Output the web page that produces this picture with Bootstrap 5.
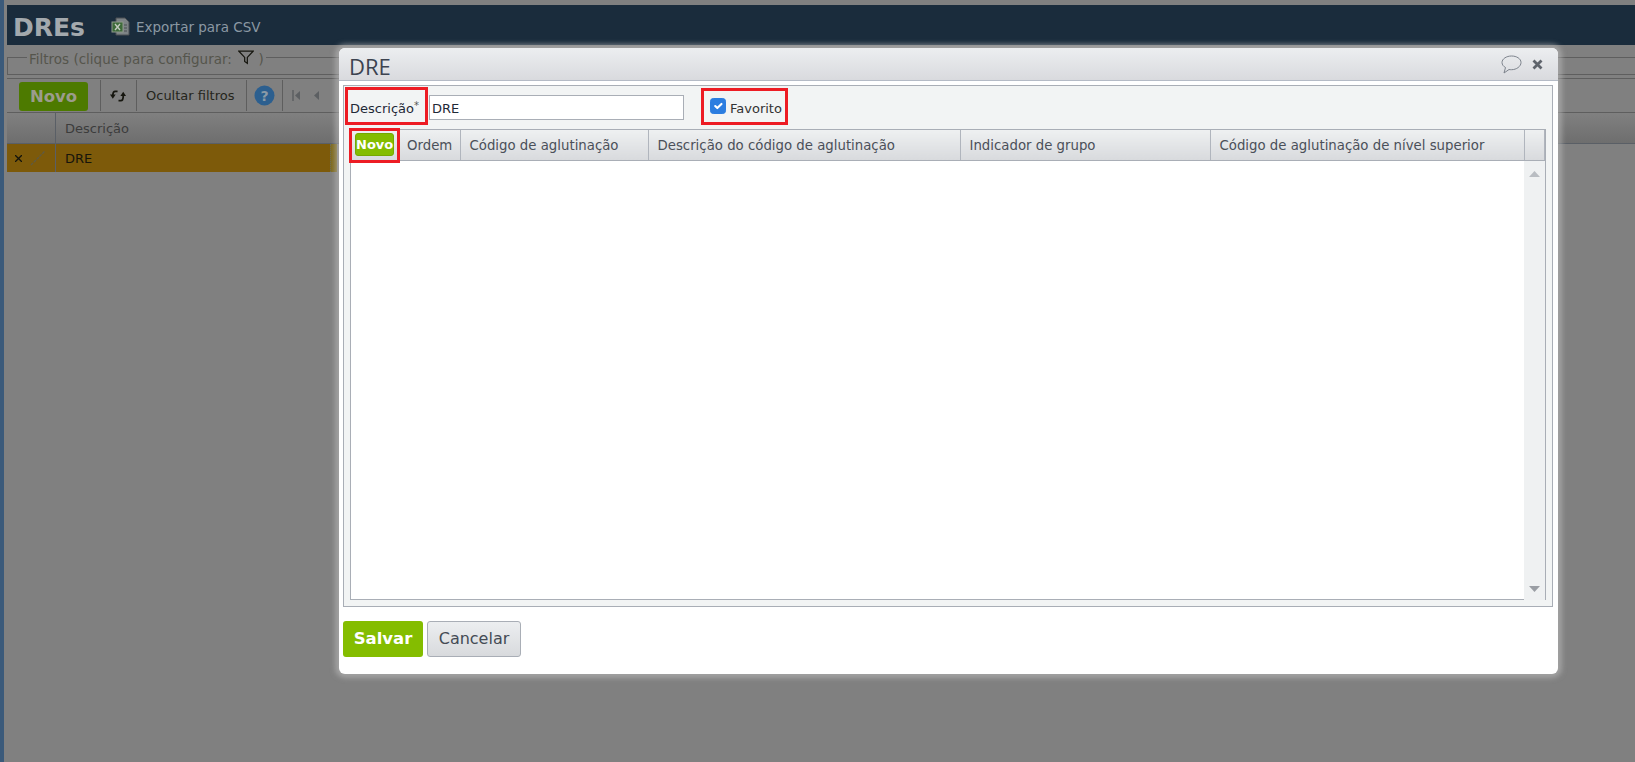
<!DOCTYPE html>
<html lang="pt-BR">
<head>
    <meta charset="UTF-8">
    <title>DREs</title>
    <link href="https://cdn.jsdelivr.net/npm/bootstrap@5.3.0/dist/css/bootstrap.min.css" rel="stylesheet">
    <style>
        html, body { height: 100%; overflow: hidden; }
        body { background: #808080; font-family: "DejaVu Sans", Verdana, sans-serif; font-size: 13px; color: #222; }

        /* pagina de fundo (escurecida) */
        .page-back { height: 762px; padding: 5px 0 0 3px; border-left: 4px solid #3b5a7a; }
        .top-bar { height: 40px; background: #1a2c3c; padding: 4px 0 0 6px; gap: 26px; }
        .top-title { font-size: 25px; font-weight: 700; color: #a3a9ad; line-height: 1; }
        .top-export { color: #8b98a3; font-size: 13.5px; gap: 5px; }
        .filter-box { margin-top: 12px; height: 18px; border: 1px solid #5e5e5e; border-right: 0; position: relative; }
        .filter-legend { position: absolute; left: 19px; top: -8px; background: #808080; padding: 0 2px; color: #55554c; font-size: 13.5px; line-height: 18px; white-space: nowrap; }
        .filter-legend svg { margin: -7px 0 0 2px; }
        .tool-bar { margin-top: 3px; height: 35px; border: 1px solid #5e5e5e; border-width: 1px 0; color: #25251c; }
        .tool-new { margin: 2px 12px 0 12px; width: 69px; height: 29px; background: #4d7a00; border-radius: 3px; color: #9c9c8c; font-weight: 700; font-size: 16.5px; line-height: 29px; text-align: center; }
        .tool-item { height: 31px; border-left: 1px solid #5e5e5e; padding: 0 9px; font-size: 13px; }
        .tool-sync { width: 36px; }
        .tool-hide { width: 110px; }
        .tool-help { width: 36px; }
        .tool-pager { gap: 11px; }
        .head-row { height: 31px; background: linear-gradient(#808080, #6e6e6e); border-bottom: 1px solid #5a5f66; color: #3c3c3c; }
        .data-row { height: 28px; width: 323px; background: #7d5a0a; color: #17150c; }
        .first-col { width: 49px; border-right: 1px solid #5a5f66; }
        .name-cell { padding: 2px 0 0 9px; }
        .row-end { width: 7px; height: 28px; border-left: 1px dotted #6b6b55; background: #7d6a20; }

        /* janela do modal */
        .dre-window { position: absolute; left: 339px; top: 48px; width: 1219px; height: 626px; background: #fff; border-radius: 6px; box-shadow: 0 0 5px 4px rgba(190, 190, 190, .55); }
        .dre-title { height: 33px; background: linear-gradient(#eceef0, #d9dade); border-bottom: 1px solid #b5bbc6; border-radius: 6px 6px 0 0; padding: 0 15px 0 10px; }
        .dre-title h1 { font-family: "Open Sans", "DejaVu Sans", sans-serif; font-size: 22px; font-weight: 400; color: #3c4350; margin: 5px 0 0; }
        .win-tools { gap: 10px; }
        .dre-panel { margin: 4px 5px 0 4px; height: 522px; border: 1px solid #a9aeb6; background: #f2f4f4; padding: 1px 6px 7px 6px; }
        .form-line { height: 42px; }
        .red-mark { border: 3px solid #ed1c24; }
        .mark-desc { width: 83px; height: 38px; margin-left: -5px; padding: 5px 0 0 2px; font-size: 13px; color: #1f2937; }
        .req-star { font-size: 10px; position: relative; top: -3px; color: #555; }
        .desc-input { width: 255px; height: 25px; margin: 8px 0 0 1px; border: 1px solid #a9aeb6; background: #fff; padding: 1px 2px 0; font-size: 13px; color: #1f2937; }
        .mark-fav { width: 87px; height: 37px; margin: 1px 0 0 17px; padding: 0 0 0 6px; gap: 4px; color: #333; font-size: 13px; }
        .fav-check { width: 16px; height: 16px; margin: -2px 0 0; flex-shrink: 0; }
        .fav-check:checked { background-color: #2b7de0; border-color: #2b7de0; }
        .fav-text { margin-top: 5px; }

        .grid-box { height: 471px; border: 1px solid #a9aeb6; background: #fff; position: relative; }
        .grid-table { table-layout: fixed; width: 100%; margin: 0; border-collapse: collapse; }
        .grid-table th { height: 30px; padding: 3px 8px 0 9px; font-weight: 400; font-size: 13.3px; color: #4b5059; white-space: nowrap; background: linear-gradient(#eef0f1, #d8dadd); border-right: 1px solid #b0b5bd; border-bottom: 1px solid #a9aeb6; vertical-align: middle; }
        .grid-table th:first-child { padding: 0 0 0 4px; border-right: 0; }
        .grid-table th:nth-child(2) { padding-left: 7px; }
        .col-a { width: 49px; } .col-b { width: 60px; } .col-c { width: 188px; } .col-d { width: 312px; }
        .col-e { width: 250px; } .col-f { width: 314px; }
        .grid-new { display: block; width: 39px; height: 23px; background: #84bd00; border: 1px solid #76a800; border-radius: 3px; color: #fff; font-weight: 700; font-size: 13px; line-height: 21px; text-align: center; }
        .new-mark { position: absolute; left: -2px; top: -2px; width: 51px; height: 35px; }
        .grid-body { height: 439px; }
        .grid-scroll { width: 21px; background: #eff1f2; padding: 10px 0 8px; }

        .btn-save { width: 80px; height: 36px; background: #84bd00; color: #fff; font-weight: 700; font-size: 16.5px; border: 0; border-radius: 3px; padding: 0; font-family: "DejaVu Sans", sans-serif; }
        .btn-cancel { width: 94px; height: 36px; background: linear-gradient(#eceef0, #d8dadd); color: #444b55; font-size: 16px; border: 1px solid #a9aeb6; border-radius: 3px; padding: 0; font-family: "DejaVu Sans", sans-serif; }
        .foot-line { margin: 14px 0 0 4px; gap: 4px; }
    </style>
</head>
<body>
    <!-- tela de fundo -->
    <div class="page-back">
        <div class="top-bar d-flex align-items-center">
            <span class="top-title">DREs</span>
            <span class="top-export d-flex align-items-center">
                <svg width="20" height="20" viewBox="0 0 20 20"><path d="M5 1h9l4 4v13H5z" fill="#7d8386" stroke="#4a4f52"/><rect x="1" y="5" width="11" height="10" fill="#3e6b3a" stroke="#8f9a8c"/><path d="M4 7l5 6M9 7l-5 6" stroke="#c3cbbf" stroke-width="1.4"/><path d="M13 8h3M13 11h3M13 14h3" stroke="#4a4f52"/></svg>
                Exportar para CSV
            </span>
        </div>
        <div class="filter-box">
            <span class="filter-legend">Filtros (clique para configurar:
                <svg width="16" height="16" viewBox="0 0 18 16"><path d="M1 1.500h16l-6.500 7V15l-3-2V8.500z" fill="none" stroke="#16160f" stroke-width="1.400"/></svg> )</span>
        </div>
        <div class="tool-bar d-flex align-items-center">
            <div class="tool-new">Novo</div>
            <div class="tool-item tool-sync d-flex align-items-center">
                <svg width="18" height="14" viewBox="0 0 18 14"><path d="M8 2H5.500C3.500 2 3 3.500 3 6.500" fill="none" stroke="#16160f" stroke-width="1.900"/><path d="M0 5.500h6L3 10z" fill="#16160f"/><path d="M9 12h2.500c2 0 2.500-1.500 2.500-5" fill="none" stroke="#16160f" stroke-width="1.900"/><path d="M11 7h6l-3-4.500z" fill="#16160f"/></svg>
            </div>
            <div class="tool-item tool-hide d-flex align-items-center">Ocultar filtros</div>
            <div class="tool-item tool-help d-flex align-items-center p-0 justify-content-center">
                <svg width="21" height="21" viewBox="0 0 21 21"><circle cx="10.500" cy="10.500" r="10" fill="#2c5f8f"/><text x="10.500" y="15.500" text-anchor="middle" font-size="14" font-weight="700" font-family="DejaVu Sans" fill="#8b9aa6">?</text></svg>
            </div>
            <div class="tool-item tool-pager d-flex align-items-center">
                <svg width="9" height="11" viewBox="0 0 9 11"><path d="M1 0v11" stroke="#5c5f62" stroke-width="1.500"/><path d="M8 1v9L3 5.500z" fill="#5c5f62"/></svg>
                <svg width="9" height="11" viewBox="0 0 9 11"><path d="M7 1v9L2 5.500z" fill="#5c5f62"/></svg>
            </div>
        </div>
        <div class="head-row d-flex align-items-center">
            <div class="first-col h-100"></div>
            <div class="name-cell">Descrição</div>
        </div>
        <div class="d-flex">
            <div class="data-row d-flex align-items-center">
                <div class="first-col h-100 d-flex align-items-center ps-2 gap-2">
                    <svg width="7" height="7" viewBox="0 0 7 7"><path d="M0 0l7 7M7 0L0 7" stroke="#14140c" stroke-width="1.300"/></svg>
                    <svg width="16" height="16" viewBox="0 0 16 16"><path d="M1 15L15 1" stroke="#5e5a44" stroke-width="1.300" stroke-dasharray="3 1"/></svg>
                </div>
                <div class="name-cell">DRE</div>
            </div>
            <div class="row-end"></div>
        </div>
    </div>

    <!-- janela DRE -->
    <div class="dre-window">
        <div class="dre-title d-flex align-items-center justify-content-between">
            <h1>DRE</h1>
            <div class="win-tools d-flex align-items-center">
                <svg width="21" height="19" viewBox="0 0 21 19"><path d="M10.500 1C5.500 1 1 3.800 1 7.500c0 2.200 1.500 4 3.500 5L3 18l5-3.500c.8.200 1.600.200 2.500.200 5 0 9.500-3.300 9.500-7.200S15.500 1 10.500 1z" fill="none" stroke="#7d838c"/></svg>
                <svg width="11" height="11" viewBox="0 0 11 11"><path d="M1.500 1.500l8 8M9.500 1.500l-8 8" stroke="#5f646c" stroke-width="2.800"/></svg>
            </div>
        </div>
        <div class="dre-panel">
            <div class="form-line d-flex align-items-start">
                <div class="mark-desc red-mark d-flex align-items-center">Descrição<span class="req-star">*</span></div>
                <input class="desc-input" type="text" value="DRE">
                <div class="mark-fav red-mark d-flex align-items-center">
                    <input class="form-check-input fav-check" type="checkbox" checked>
                    <span class="fav-text">Favorito</span>
                </div>
            </div>
            <div class="grid-box">
                <span class="new-mark red-mark"></span>
                <table class="grid-table">
                    <colgroup>
                        <col class="col-a"><col class="col-b"><col class="col-c"><col class="col-d"><col class="col-e"><col class="col-f"><col>
                    </colgroup>
                    <thead>
                        <tr>
                            <th><span class="grid-new">Novo</span></th>
                            <th>Ordem</th>
                            <th>Código de aglutinação</th>
                            <th>Descrição do código de aglutinação</th>
                            <th>Indicador de grupo</th>
                            <th>Código de aglutinação de nível superior</th>
                            <th></th>
                        </tr>
                    </thead>
                </table>
                <div class="grid-body d-flex justify-content-end">
                    <div class="grid-scroll d-flex flex-column justify-content-between align-items-center">
                        <svg width="11" height="6" viewBox="0 0 11 6"><path d="M0 6L5.500 0 11 6z" fill="#b9bdc2"/></svg>
                        <svg width="11" height="6" viewBox="0 0 11 6"><path d="M0 0L5.500 6 11 0z" fill="#9a9ea4"/></svg>
                    </div>
                </div>
            </div>
        </div>
        <div class="foot-line d-flex">
            <button class="btn-save" type="button">Salvar</button>
            <button class="btn-cancel" type="button">Cancelar</button>
        </div>
    </div>

    <script src="https://cdn.jsdelivr.net/npm/bootstrap@5.3.0/dist/js/bootstrap.bundle.min.js"></script>
</body>
</html>
